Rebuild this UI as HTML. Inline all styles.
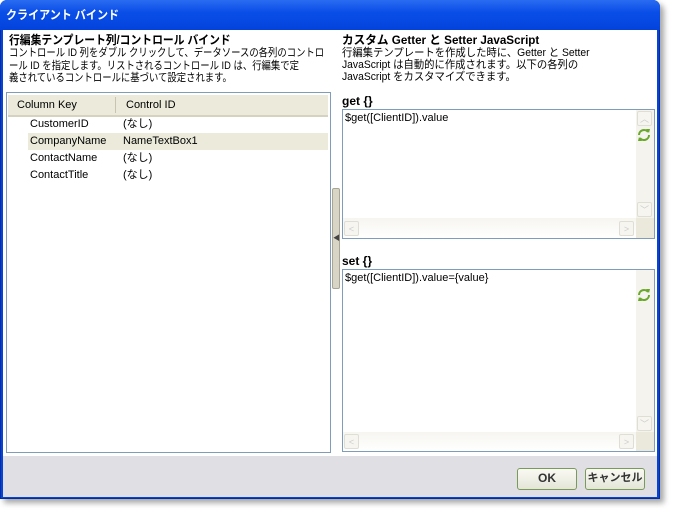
<!DOCTYPE html>
<html><head><style>
body{margin:0;width:677px;height:518px;background:#fff;position:relative;overflow:hidden;font-family:"Liberation Sans","Noto Sans CJK JP",sans-serif;font-size:11px;color:#000}
.win{position:absolute;left:0;top:0;width:658px;height:497px;background:#0842d8;border:1px solid #0030a0;border-radius:7px 7px 0 0;box-shadow:4px 4px 6px rgba(0,0,0,.35)}
.title{position:absolute;left:0;top:0;width:660px;height:30px;background:linear-gradient(#2a6cf0,#0a4ee8 40%,#0343dc);border-radius:7px 7px 0 0;color:#fff;font-weight:bold;font-size:12px;line-height:30px;padding-left:6px;box-sizing:border-box}
.client{position:absolute;left:3px;top:30px;width:654px;height:426px;background:#fff}
.foot{position:absolute;left:3px;top:456px;width:654px;height:41px;background:#e0dfe3}
.a{position:absolute;white-space:nowrap;line-height:13px}
.b{font-weight:bold;font-size:12px}
.s{transform-origin:0 0}
.box{position:absolute;border:1px solid #7f9db9;background:#fff;box-sizing:border-box}
.sb{position:absolute;background:#f4f3ee}
.btn{position:absolute;border:1px solid #7a9a5a;border-radius:3px;background:linear-gradient(#fafaf4,#e4e6d8);font-weight:bold;color:#333;text-align:center;line-height:19px;box-sizing:border-box;font-size:12px;white-space:nowrap}
.arr{position:absolute;width:15px;height:15px;border:1px solid #e0ded4;background:#f6f5f0;border-radius:2px;color:#ccc;font-size:9px;text-align:center;line-height:15px;box-sizing:border-box}
</style></head><body>
<div class="win"></div>
<div class="title"><span style="display:inline-block;transform:scaleX(.92);transform-origin:0 0">クライアント バインド</span></div>
<div class="client"></div>
<div class="foot"></div>

<div class="a b s" style="left:9px;top:34px;transform:scaleX(.9)">行編集テンプレート列/コントロール バインド</div>
<div class="a s" style="left:9px;top:47px;line-height:12.5px;transform:scaleX(.85)">コントロール ID 列をダブル クリックして、データソースの各列のコントロ<br>ール ID を指定します。リストされるコントロール ID は、行編集で定<br>義されているコントロールに基づいて設定されます。</div>

<div class="box" style="left:6px;top:92px;width:325px;height:361px"></div>
<div class="a" style="left:8px;top:95px;width:320px;height:20px;background:#ebeadb;border-bottom:2px solid #d6d2c2"></div>
<div class="a" style="left:115px;top:97px;width:1px;height:16px;background:#c7c5b2"></div>
<div class="a" style="left:17px;top:99px">Column Key</div>
<div class="a" style="left:126px;top:99px">Control ID</div>
<div class="a" style="left:28px;top:133px;width:300px;height:17px;background:#ebeadb"></div>
<div class="a" style="left:30px;top:118px">CustomerID</div><div class="a" style="left:123px;top:118px">(なし)</div>
<div class="a" style="left:30px;top:135px">CompanyName</div><div class="a" style="left:123px;top:135px">NameTextBox1</div>
<div class="a" style="left:30px;top:152px">ContactName</div><div class="a" style="left:123px;top:152px">(なし)</div>
<div class="a" style="left:30px;top:169px">ContactTitle</div><div class="a" style="left:123px;top:169px">(なし)</div>

<div class="a" style="left:332px;top:188px;width:6px;height:99px;background:#d8d5c6;border:1px solid #a8a594;border-radius:2px"></div>
<div class="a" style="left:333px;top:232px;font-size:7px;color:#444">◀</div>

<div class="a b s" style="left:342px;top:34px;transform:scaleX(.97)">カスタム Getter と Setter JavaScript</div>
<div class="a s" style="left:342px;top:47px;line-height:12px;transform:scaleX(.94)">行編集テンプレートを作成した時に、Getter と Setter<br>JavaScript は自動的に作成されます。以下の各列の<br>JavaScript をカスタマイズできます。</div>

<div class="a b" style="left:342px;top:95px">get {}</div>
<div class="box" style="left:342px;top:109px;width:313px;height:130px"></div>
<div class="a" style="left:345px;top:112px">$get([ClientID]).value</div>
<div class="sb" style="left:636px;top:110px;width:18px;height:108px"></div>
<div class="sb" style="left:343px;top:218px;width:293px;height:20px;background:linear-gradient(#f6f5f0,#fff)"></div>
<div class="sb" style="left:636px;top:218px;width:18px;height:20px;background:#ebe9dc"></div>
<div class="arr" style="left:637px;top:111px">︿</div>
<div class="arr" style="left:637px;top:202px">﹀</div>
<div class="arr" style="left:344px;top:221px">&lt;</div>
<div class="arr" style="left:619px;top:221px">&gt;</div>
<svg class="a" style="left:636px;top:128px" width="16" height="14" viewBox="0 0 16 14"><path d="M3 7a5 5 0 0 1 9-3M13 7a5 5 0 0 1-9 3" fill="none" stroke="#6aa82a" stroke-width="2"/><path d="M10 1l4 0 -1 4z M6 13l-4 0 1-4z" fill="#6aa82a"/></svg>

<div class="a b" style="left:342px;top:255px">set {}</div>
<div class="box" style="left:342px;top:269px;width:313px;height:183px"></div>
<div class="a" style="left:345px;top:272px">$get([ClientID]).value={value}</div>
<div class="sb" style="left:636px;top:270px;width:18px;height:162px"></div>
<div class="sb" style="left:343px;top:432px;width:293px;height:19px;background:linear-gradient(#f6f5f0,#fff)"></div>
<div class="sb" style="left:636px;top:432px;width:18px;height:19px;background:#ebe9dc"></div>
<div class="arr" style="left:637px;top:416px">﹀</div>
<div class="arr" style="left:344px;top:434px">&lt;</div>
<div class="arr" style="left:619px;top:434px">&gt;</div>
<svg class="a" style="left:636px;top:288px" width="16" height="14" viewBox="0 0 16 14"><path d="M3 7a5 5 0 0 1 9-3M13 7a5 5 0 0 1-9 3" fill="none" stroke="#6aa82a" stroke-width="2"/><path d="M10 1l4 0 -1 4z M6 13l-4 0 1-4z" fill="#6aa82a"/></svg>

<div class="btn" style="left:517px;top:468px;width:60px;height:22px">OK</div>
<div class="btn" style="left:585px;top:468px;width:60px;height:22px;font-size:11px">キャンセル</div>
</body></html>
